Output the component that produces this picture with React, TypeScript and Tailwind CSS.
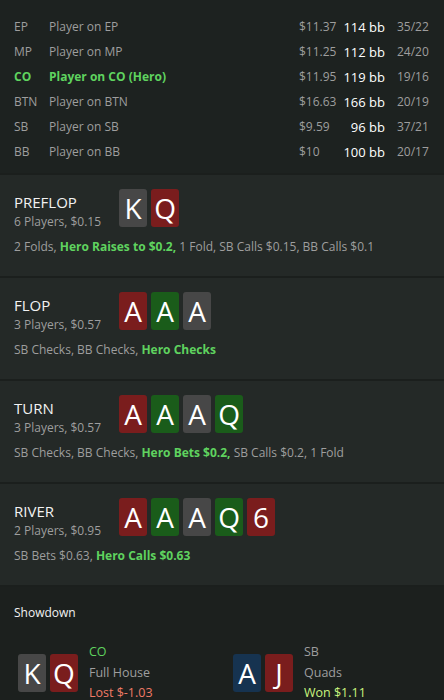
import React from 'react';

type Suit = 'red' | 'green' | 'gray' | 'blue';

const suitBg: Record<Suit, string> = {
  red: 'bg-[#7a1d1d]',
  green: 'bg-[#1a5c1a]',
  gray: 'bg-[#474747]',
  blue: 'bg-[#163350]',
};

const players = [
  { pos: 'EP', name: 'Player on EP', money: '$11.37', bb: '114 bb', stats: '35/22' },
  { pos: 'MP', name: 'Player on MP', money: '$11.25', bb: '112 bb', stats: '24/20' },
  { pos: 'CO', name: 'Player on CO (Hero)', money: '$11.95', bb: '119 bb', stats: '19/16', hero: true },
  { pos: 'BTN', name: 'Player on BTN', money: '$16.63', bb: '166 bb', stats: '20/19' },
  { pos: 'SB', name: 'Player on SB', money: '$9.59', bb: '96 bb', stats: '37/21' },
  { pos: 'BB', name: 'Player on BB', money: '$10', bb: '100 bb', stats: '20/17' },
];

type Street = {
  name: string;
  info: string;
  cards: [string, Suit][];
  before: string;
  hero: string;
  after?: string;
};

const streets: Street[] = [
  {
    name: 'PREFLOP',
    info: '6 Players, $0.15',
    cards: [['K', 'gray'], ['Q', 'red']],
    before: '2 Folds, ',
    hero: 'Hero Raises to $0.2,',
    after: ' 1 Fold, SB Calls $0.15, BB Calls $0.1',
  },
  {
    name: 'FLOP',
    info: '3 Players, $0.57',
    cards: [['A', 'red'], ['A', 'green'], ['A', 'gray']],
    before: 'SB Checks, BB Checks, ',
    hero: 'Hero Checks',
  },
  {
    name: 'TURN',
    info: '3 Players, $0.57',
    cards: [['A', 'red'], ['A', 'green'], ['A', 'gray'], ['Q', 'green']],
    before: 'SB Checks, BB Checks, ',
    hero: 'Hero Bets $0.2,',
    after: ' SB Calls $0.2, 1 Fold',
  },
  {
    name: 'RIVER',
    info: '2 Players, $0.95',
    cards: [['A', 'red'], ['A', 'green'], ['A', 'gray'], ['Q', 'green'], ['6', 'red']],
    before: 'SB Bets $0.63, ',
    hero: 'Hero Calls $0.63',
  },
];

function Card({ rank, suit }: { rank: string; suit: Suit }) {
  return (
    <div
      className={`w-[28px] h-[38px] rounded-[3px] flex items-center justify-center text-[28px] leading-none text-white ${suitBg[suit]}`}
    >
      {rank}
    </div>
  );
}

export default function App() {
  return (
    <div
      className="w-[444px] h-[700px] overflow-hidden bg-[#1b1f1d] flex flex-col gap-[2px] text-[12px] text-[#9e9e9e]"
      style={{ fontFamily: '"Open Sans", sans-serif' }}
    >
      {/* players */}
      <div className="bg-[#1d2220] px-[14px] pt-[14px] pb-[9px]">
        {players.map((p) => (
          <div key={p.pos} className="grid grid-cols-[35px_1fr_44px_42px_45px] h-[25px] items-center leading-[20px]">
            <span className={p.hero ? 'text-[#5fd35f] font-bold' : ''}>{p.pos}</span>
            <span className={p.hero ? 'text-[#5fd35f] font-bold' : ''}>{p.name}</span>
            <span>{p.money}</span>
            <span className="text-right text-white text-[13px]">{p.bb}</span>
            <span className="pl-[12px]">{p.stats}</span>
          </div>
        ))}
      </div>

      {/* streets */}
      {streets.map((s) => (
        <div key={s.name} className="bg-[#242927] px-[14px] pt-[14px] pb-[19px]">
          <div className="flex items-start gap-[18px]">
            <div className="pt-[3px]">
              <div className="text-[15px] leading-[20px] text-[#f2f2f2]">{s.name}</div>
              <div className="leading-[20px]">{s.info}</div>
            </div>
            <div className="flex gap-[4px]">
              {s.cards.map(([r, su], i) => (
                <Card key={i} rank={r} suit={su} />
              ))}
            </div>
          </div>
          <div className="mt-[5px] leading-[20px]">
            {s.before}
            <span className="text-[#5fd35f] font-bold">{s.hero}</span>
            {s.after}
          </div>
        </div>
      ))}

      {/* showdown */}
      <div className="flex-1 bg-[#1c201e] pt-[16px]">
        <div className="px-[14px] leading-[20px] text-[#f2f2f2]">Showdown</div>
        <div className="grid grid-cols-2 gap-[22px] px-[18px] mt-[19px]">
          <div className="flex items-center gap-[11px]">
            <div className="flex gap-[4px]">
              <Card rank="K" suit="gray" />
              <Card rank="Q" suit="red" />
            </div>
            <div className="leading-[20.5px] text-[12.5px]">
              <div className="text-[#5fd35f]">CO</div>
              <div>Full House</div>
              <div className="text-[#ef7a66]">Lost $-1.03</div>
            </div>
          </div>
          <div className="flex items-center gap-[11px]">
            <div className="flex gap-[4px]">
              <Card rank="A" suit="blue" />
              <Card rank="J" suit="red" />
            </div>
            <div className="leading-[20.5px] text-[12.5px]">
              <div>SB</div>
              <div>Quads</div>
              <div className="text-[#c9f57f]">Won $1.11</div>
            </div>
          </div>
        </div>
      </div>
    </div>
  );
}
